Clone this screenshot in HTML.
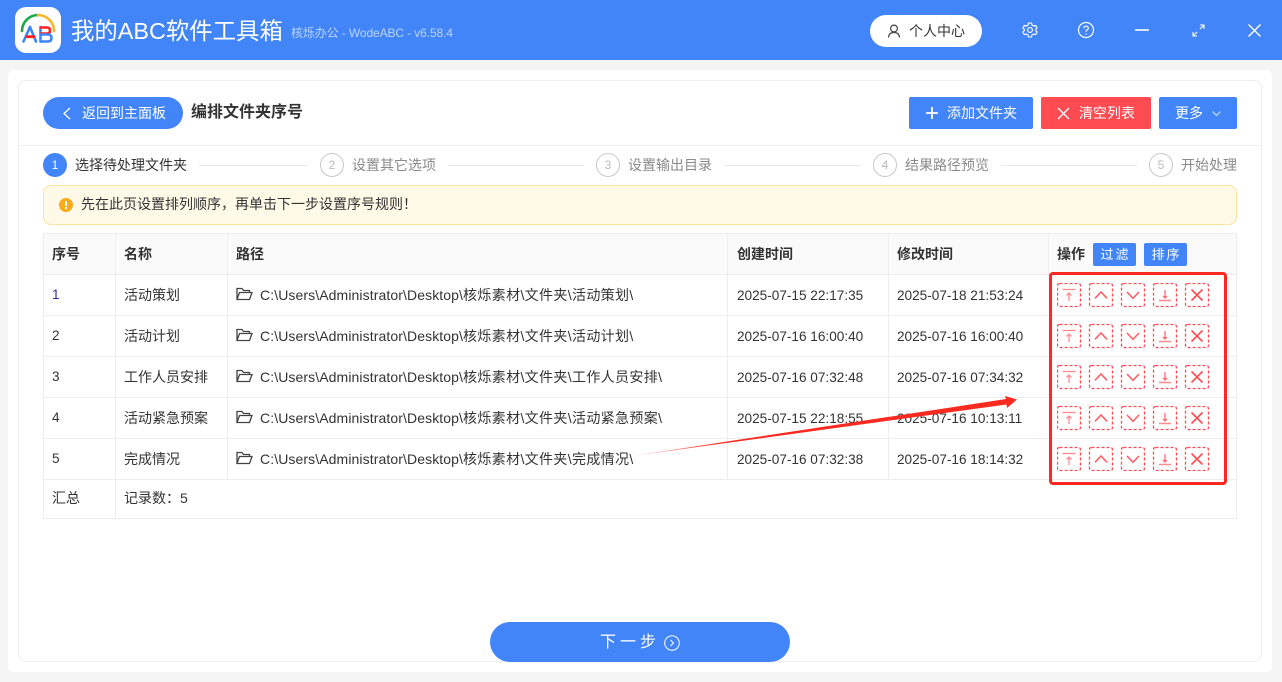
<!DOCTYPE html>
<html lang="zh"><head><meta charset="utf-8"><title>我的ABC软件工具箱</title>
<style>
*{box-sizing:border-box}
html,body{margin:0;padding:0;width:1282px;height:682px;overflow:hidden;background:#f5f5f5;font-family:"Liberation Sans","Noto Sans CJK SC",sans-serif;color:#333}
.a{position:absolute;white-space:nowrap}
.t{font-size:14px;line-height:18px;color:#333}
.d{font-size:13.6px;line-height:18px;color:#333}
.l{letter-spacing:.1px}
.p{letter-spacing:.35px}
.b{position:absolute;border-radius:2px;color:#fff;font-size:14px;line-height:32px;white-space:nowrap;height:32px;top:97px}
.sc{position:absolute;top:153px;width:24px;height:24px;border-radius:50%;border:1px solid #c8c8c8;color:#bbb;font-size:12px;line-height:22px;text-align:center}
.st{position:absolute;top:156px;font-size:14px;line-height:18px;color:#8a8a8a;white-space:nowrap}
.sl{position:absolute;top:165px;height:1px;background:#eaeaea}
.hl{position:absolute;left:43px;width:1194px;height:1px;background:#ededed}
.vl{position:absolute;top:234px;width:1px;height:285px;background:#ededed}
.th{position:absolute;top:245px;font-size:14px;line-height:18px;font-weight:bold;color:#333;white-space:nowrap}
.f{position:absolute;left:236px;width:17px;height:14px}
</style></head><body>
<div class="a" style="left:0;top:0;width:1282px;height:60px;background:#4285f9"></div>
<div class="a" style="left:15px;top:7px;width:46px;height:46px;border-radius:11px;background:#fff"></div>
<svg class="a" style="left:15px;top:7px" width="46" height="46" viewBox="0 0 46 46" fill="none" stroke-linecap="round">
<path d="M7 24A16 16 0 0 1 23 8" stroke="#1fa84a" stroke-width="2.600"/><path d="M23 8A16 16 0 0 1 39 24" stroke="#f7b52c" stroke-width="2.600"/>
<path d="M8.500 34.500L15 20" stroke="#3d86f5" stroke-width="2.600"/><path d="M15 20L21 34.500" stroke="#3d86f5" stroke-width="2.600"/><path d="M12 29.700H19" stroke="#f22" stroke-width="2.800"/>
<path d="M25.500 20V34.500" stroke="#3d86f5" stroke-width="2.600"/><path d="M26 20.500H32Q35 20.500 35 23.500Q35 26.500 32 26.500H26" stroke="#f22" stroke-width="2.600"/><path d="M26 27.500H33Q36.500 27.500 36.500 31Q36.500 34.500 33 34.500H26" stroke="#3d86f5" stroke-width="2.600"/></svg>
<div class="a" style="left:71px;top:14px;font-size:23.4px;line-height:34px;color:#fff">我的ABC软件工具箱</div>
<div class="a" style="left:291px;top:24px;font-size:12px;line-height:18px;color:#bcd3fb;letter-spacing:-.11px">核烁办公 - WodeABC - v6.58.4</div>
<div class="a" style="left:870px;top:15px;width:112px;height:32px;border-radius:16px;background:#fff"></div>
<svg class="a" style="left:887px;top:24px" width="14" height="14" viewBox="0 0 14 14" fill="none" stroke="#444" stroke-width="1.200"><circle cx="7" cy="4.500" r="3.400"/><path d="M1.500 13.500C1.700 10.300 3.700 8.500 7 8.500S12.300 10.300 12.500 13.500"/></svg>
<div class="a t" style="left:909px;top:22px">个人中心</div>
<svg class="a" style="left:1022px;top:22px" width="16" height="16" viewBox="0 0 16 16" fill="none" stroke="#fff" stroke-width="1.100" stroke-linejoin="round"><path d="M6.500 1H9.500L10 3L11.700 4L13.700 3.400L15.200 6L13.700 7.300V8.700L15.200 10L13.700 12.600L11.700 12L10 13L9.500 15H6.500L6 13L4.300 12L2.300 12.600L.8 10L2.300 8.700V7.300L.8 6L2.300 3.400L4.300 4L6 3Z"/><circle cx="8" cy="8" r="2.400"/></svg>
<svg class="a" style="left:1077px;top:21px" width="18" height="18" viewBox="0 0 18 18" fill="none" stroke="#fff" stroke-width="1.200"><circle cx="9" cy="9" r="7.500"/><path d="M6.800 7.200C6.800 4.500 11.300 4.500 11.300 7.200C11.300 8.800 9 8.800 9 10.800"/><path d="M9 12.500V13.800"/></svg>
<div class="a" style="left:1135px;top:29px;width:14px;height:2px;background:#d7e5fd"></div>
<svg class="a" style="left:1192px;top:24px" width="13" height="13" viewBox="0 0 13 13" fill="none" stroke="#fff" stroke-width="1.100"><path d="M1 12L5 8M8 5L12 1M8 1H12V5M1 8V12H5"/></svg>
<svg class="a" style="left:1248px;top:24px" width="13" height="13" viewBox="0 0 13 13" fill="none" stroke="#fff" stroke-width="1.400"><path d="M.5 .5L12.500 12.500M12.500 .5L.5 12.500"/></svg>

<div class="a" style="left:8px;top:70px;width:1264px;height:602px;border-radius:6px;background:#fff"></div>
<div class="a" style="left:18px;top:80px;width:1244px;height:582px;border-radius:8px;border:1px solid #eee"></div>

<div class="a" style="left:43px;top:97px;width:140px;height:32px;border-radius:16px;background:#4285f9"></div>
<svg class="a" style="left:62px;top:107px" width="10" height="13" viewBox="0 0 10 13" fill="none" stroke="#fff" stroke-width="1.300"><path d="M8 1L2 6.500L8 12"/></svg>
<div class="a" style="left:82px;top:104px;font-size:14px;line-height:18px;color:#fff">返回到主面板</div>
<div class="a" style="left:191px;top:102px;font-size:16px;line-height:22px;font-weight:bold;color:#333">编排文件夹序号</div>

<div class="b" style="left:909px;width:124px;background:#4285f9"></div>
<svg class="a" style="left:925px;top:106px" width="14" height="14" viewBox="0 0 14 14" stroke="#fff" stroke-width="1.800"><path d="M7 1V13M1 7H13"/></svg>
<div class="a" style="left:947px;top:104px;font-size:14px;line-height:18px;color:#fff">添加文件夹</div>
<div class="b" style="left:1041px;width:110px;background:#ff4b51"></div>
<svg class="a" style="left:1057px;top:107px" width="13" height="13" viewBox="0 0 13 13" stroke="#fff" stroke-width="1.300"><path d="M1 1L12 12M12 1L1 12"/></svg>
<div class="a" style="left:1079px;top:104px;font-size:14px;line-height:18px;color:#fff">清空列表</div>
<div class="b" style="left:1159px;width:78px;background:#4285f9"></div>
<div class="a" style="left:1175px;top:104px;font-size:14px;line-height:18px;color:#fff">更多</div>
<svg class="a" style="left:1211px;top:110px" width="11" height="7" viewBox="0 0 11 7" fill="none" stroke="#dbe7fe" stroke-width="1"><path d="M1.500 1.500L5.500 5.500L9.500 1.500"/></svg>

<div class="a" style="left:19px;top:145px;width:1242px;height:1px;background:#eee"></div>

<div class="sc" style="left:43px;background:#4285f9;border-color:#4285f9;color:#fff">1</div>
<div class="st" style="left:75px;color:#333">选择待处理文件夹</div>
<div class="sl" style="left:199px;width:109px"></div>
<div class="sc" style="left:320px">2</div><div class="st" style="left:352px">设置其它选项</div>
<div class="sl" style="left:448px;width:136px"></div>
<div class="sc" style="left:596px">3</div><div class="st" style="left:628px">设置输出目录</div>
<div class="sl" style="left:724px;width:137px"></div>
<div class="sc" style="left:873px">4</div><div class="st" style="left:905px">结果路径预览</div>
<div class="sl" style="left:1001px;width:136px"></div>
<div class="sc" style="left:1149px">5</div><div class="st" style="left:1181px">开始处理</div>

<div class="a" style="left:43px;top:185px;width:1194px;height:40px;border-radius:8px;background:#fff9e7;border:1px solid #fae29f"></div>
<div class="a" style="left:59px;top:198px;width:14px;height:14px;border-radius:50%;background:#fbaa1b"></div>
<div class="a" style="left:65px;top:201px;width:2px;height:5px;background:#fff"></div>
<div class="a" style="left:65px;top:207px;width:2px;height:2px;background:#fff"></div>
<div class="a t" style="left:81px;top:195px">先在此页设置排列顺序，再单击下一步设置序号规则！</div>

<div class="a" style="left:43px;top:234px;width:1194px;height:41px;background:#fafafa"></div>
<div class="hl" style="top:233px"></div><div class="hl" style="top:274px"></div><div class="hl" style="top:315px"></div><div class="hl" style="top:356px"></div><div class="hl" style="top:397px"></div><div class="hl" style="top:438px"></div><div class="hl" style="top:479px"></div><div class="hl" style="top:518px"></div>
<div class="vl" style="left:43px"></div><div class="vl" style="left:115px"></div>
<div class="vl" style="left:227px;height:245px"></div><div class="vl" style="left:727px;height:245px"></div><div class="vl" style="left:888px;height:245px"></div><div class="vl" style="left:1048px;height:41px"></div><div class="vl" style="left:1236px"></div>

<div class="th" style="left:52px">序号</div><div class="th" style="left:124px">名称</div><div class="th" style="left:236px">路径</div><div class="th" style="left:737px">创建时间</div><div class="th" style="left:897px">修改时间</div><div class="th" style="left:1057px">操作</div>
<div class="a" style="left:1093px;top:243px;width:43px;height:23px;border-radius:2px;background:#4285f9;color:#fff;font-size:13px;line-height:23px;padding-left:2px;text-align:center;letter-spacing:2px">过滤</div>
<div class="a" style="left:1144px;top:243px;width:43px;height:23px;border-radius:2px;background:#4285f9;color:#fff;font-size:13px;line-height:23px;padding-left:2px;text-align:center;letter-spacing:2px">排序</div>

<div class="a d" style="left:52px;top:286px;color:#3b2b8c">1</div><div class="a t" style="left:124px;top:286px">活动策划</div><div class="a t l" style="left:260px;top:286px">C:\Users\Administrator\Desktop\<span class="p">核烁素材\文件夹\活动策划\</span></div><div class="a d" style="left:737px;top:287px">2025-07-15 22:17:35</div><div class="a d" style="left:897px;top:287px">2025-07-18 21:53:24</div>
<div class="a d" style="left:52px;top:327px">2</div><div class="a t" style="left:124px;top:327px">活动计划</div><div class="a t l" style="left:260px;top:327px">C:\Users\Administrator\Desktop\<span class="p">核烁素材\文件夹\活动计划\</span></div><div class="a d" style="left:737px;top:328px">2025-07-16 16:00:40</div><div class="a d" style="left:897px;top:328px">2025-07-16 16:00:40</div>
<div class="a d" style="left:52px;top:368px">3</div><div class="a t" style="left:124px;top:368px">工作人员安排</div><div class="a t l" style="left:260px;top:368px">C:\Users\Administrator\Desktop\<span class="p">核烁素材\文件夹\工作人员安排\</span></div><div class="a d" style="left:737px;top:369px">2025-07-16 07:32:48</div><div class="a d" style="left:897px;top:369px">2025-07-16 07:34:32</div>
<div class="a d" style="left:52px;top:409px">4</div><div class="a t" style="left:124px;top:409px">活动紧急预案</div><div class="a t l" style="left:260px;top:409px">C:\Users\Administrator\Desktop\<span class="p">核烁素材\文件夹\活动紧急预案\</span></div><div class="a d" style="left:737px;top:410px">2025-07-15 22:18:55</div><div class="a d" style="left:897px;top:410px">2025-07-16 10:13:11</div>
<div class="a d" style="left:52px;top:450px">5</div><div class="a t" style="left:124px;top:450px">完成情况</div><div class="a t l" style="left:260px;top:450px">C:\Users\Administrator\Desktop\<span class="p">核烁素材\文件夹\完成情况\</span></div><div class="a d" style="left:737px;top:451px">2025-07-16 07:32:38</div><div class="a d" style="left:897px;top:451px">2025-07-16 18:14:32</div>
<div class="a t" style="left:52px;top:489px">汇总</div><div class="a t" style="left:124px;top:489px">记录数：5</div>

<svg class="f" style="top:287px" viewBox="0 0 17 14" fill="none" stroke="#444" stroke-width="1.300"><path d="M1 12.500V1.500H6L7.500 3.500H13.500V5.500M1 12.500H13.500L16 5.500H3.500L1 12.500Z"/></svg>
<svg class="f" style="top:328px" viewBox="0 0 17 14" fill="none" stroke="#444" stroke-width="1.300"><path d="M1 12.500V1.500H6L7.500 3.500H13.500V5.500M1 12.500H13.500L16 5.500H3.500L1 12.500Z"/></svg>
<svg class="f" style="top:369px" viewBox="0 0 17 14" fill="none" stroke="#444" stroke-width="1.300"><path d="M1 12.500V1.500H6L7.500 3.500H13.500V5.500M1 12.500H13.500L16 5.500H3.500L1 12.500Z"/></svg>
<svg class="f" style="top:410px" viewBox="0 0 17 14" fill="none" stroke="#444" stroke-width="1.300"><path d="M1 12.500V1.500H6L7.500 3.500H13.500V5.500M1 12.500H13.500L16 5.500H3.500L1 12.500Z"/></svg>
<svg class="f" style="top:451px" viewBox="0 0 17 14" fill="none" stroke="#444" stroke-width="1.300"><path d="M1 12.500V1.500H6L7.500 3.500H13.500V5.500M1 12.500H13.500L16 5.500H3.500L1 12.500Z"/></svg>

<svg class="a" style="left:1057px;top:283px" width="153" height="188" viewBox="0 0 153 188" fill="none">
<defs><g id="box"><rect x=".5" y=".5" width="23" height="23" rx="2" stroke="#ff4b51" stroke-dasharray="3 2"/></g>
<g id="r" stroke-width="1.300"><use href="#box"/><path d="M5.500 6.500H18.500" stroke="#ff8a8e"/><path d="M12 18V10M9.500 12.500L12 10L14.500 12.500" stroke="#ff8a8e"/>
<use href="#box" x="32"/><path d="M38 15.300L44 9L50 15.300" stroke="#ff5a60" stroke-width="1.500"/>
<use href="#box" x="64"/><path d="M70 9L76 15.300L82 9" stroke="#ff5a60" stroke-width="1.500"/>
<use href="#box" x="96"/><path d="M102 17.500H114" stroke="#ff8a8e" stroke-width="1.500"/><path d="M108 7V14.500M106 13L108 15L110 13" stroke="#ff6b70"/>
<use href="#box" x="128"/><path d="M134.500 6.500L145.500 17.500M145.500 6.500L134.500 17.500" stroke="#ff4b51" stroke-width="1.600"/></g></defs>
<use href="#r"/><use href="#r" y="41"/><use href="#r" y="82"/><use href="#r" y="123"/><use href="#r" y="164"/></svg>

<div class="a" style="left:1049px;top:272px;width:178px;height:213px;border:3px solid #fa2a20;border-radius:4px"></div>
<svg class="a" style="left:625px;top:390px" width="400" height="70" viewBox="0 0 400 70"><defs><linearGradient id="g" gradientUnits="userSpaceOnUse" x1="7" y1="0" x2="110" y2="0"><stop offset="0" stop-color="#ffc0b8"/><stop offset="1" stop-color="#fb2a20"/></linearGradient></defs><path d="M7 66L381 9L380 6L392 9.500L382 18L381.500 14.500Z" fill="url(#g)"/></svg>

<div class="a" style="left:490px;top:622px;width:300px;height:40px;border-radius:20px;background:#4285f9"></div>
<div class="a" style="left:600px;top:632px;font-size:16px;line-height:21px;color:#fff;letter-spacing:4px">下一步</div>
<svg class="a" style="left:664px;top:635px" width="16" height="16" viewBox="0 0 16 16" fill="none" stroke="#fff" stroke-width="1"><circle cx="8" cy="8" r="7.300"/><path d="M6.500 5L9.500 8L6.500 11"/></svg>
</body></html>
